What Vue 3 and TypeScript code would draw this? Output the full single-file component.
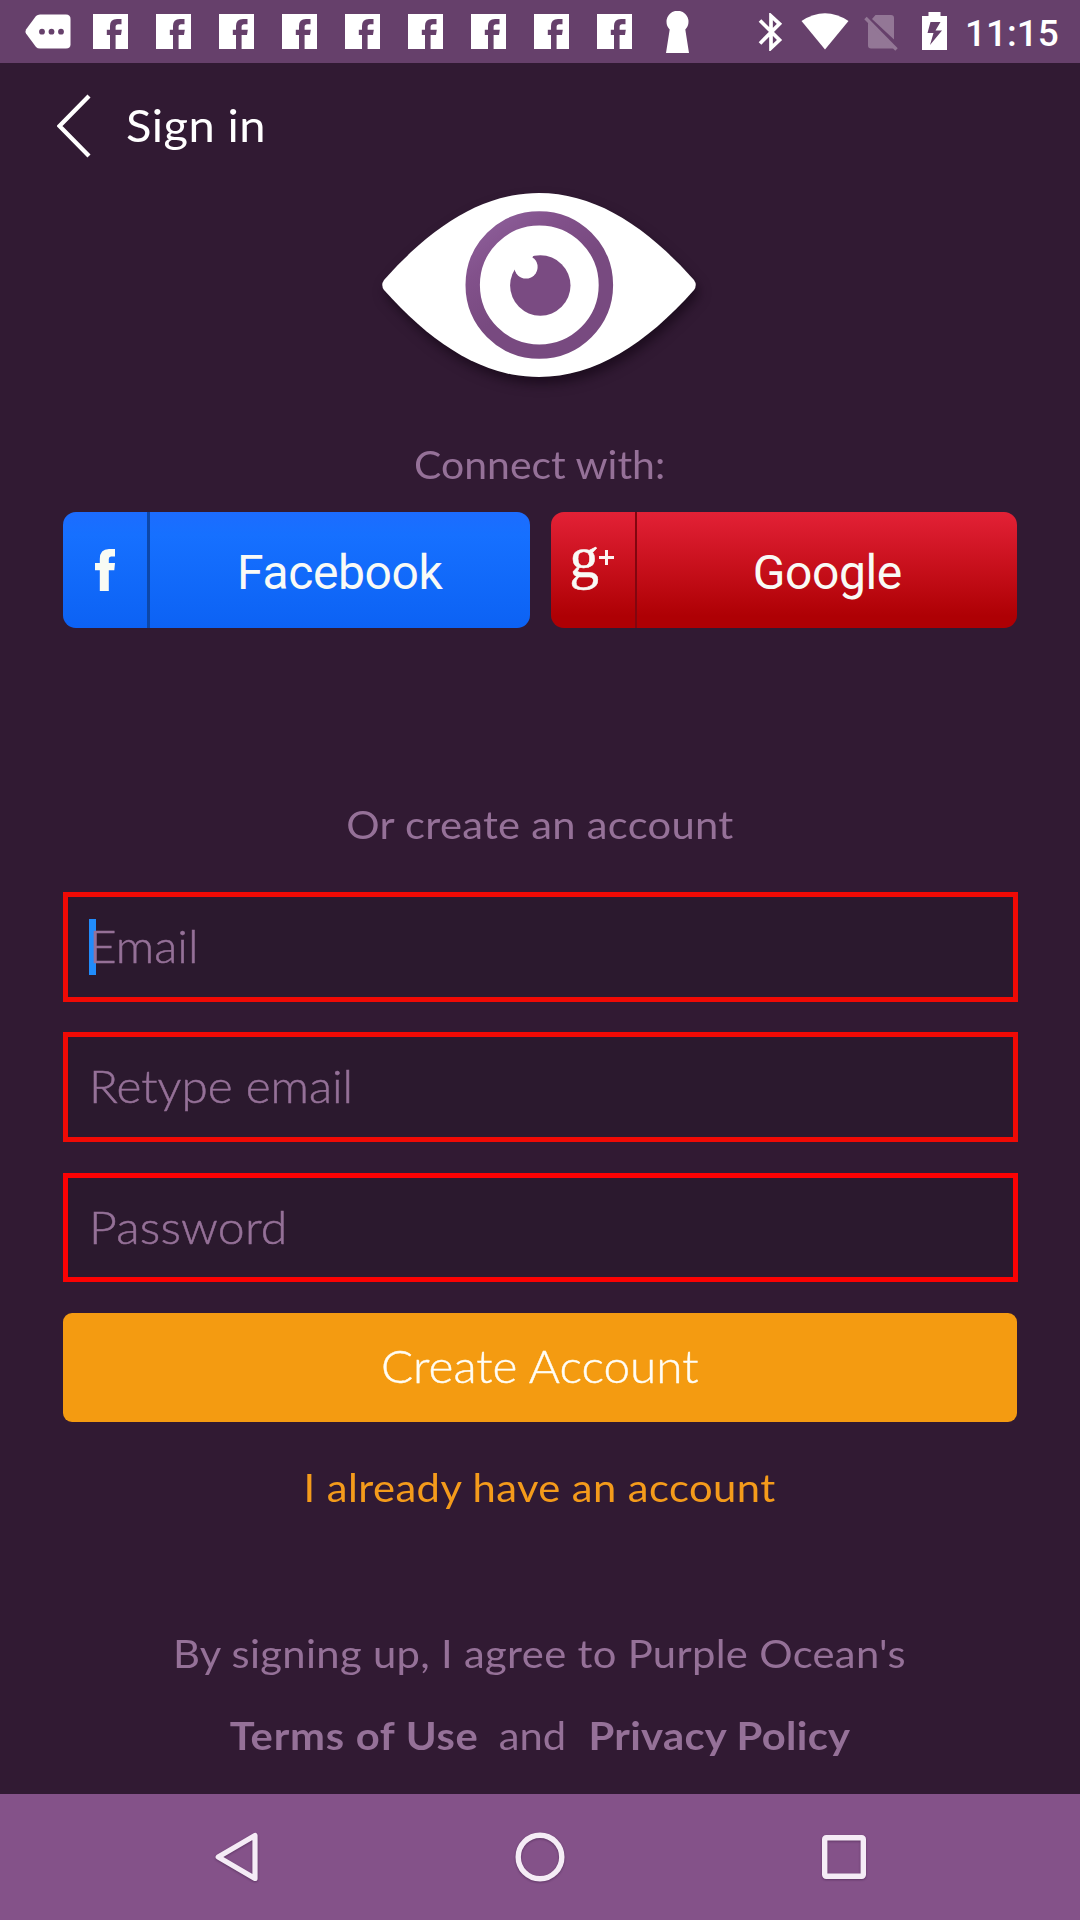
<script setup lang="ts">
const notifications: number[] = Array.from({ length: 9 }, (_, i) => i)
const fields = [
  { id: 'email', label: 'Email', focused: true },
  { id: 'retype', label: 'Retype email', focused: false },
  { id: 'password', label: 'Password', focused: false },
]
</script>

<template>
  <div class="screen">
    <div class="status">
      <svg class="tag" width="46" height="36" viewBox="0 0 46 36">
        <path d="M11 2Q12.500 .5 15 .5H41Q45.500 .5 45.500 5V30.500Q45.500 34.500 41 34.500H15Q12.500 34.500 11 33L1 19.500Q0 17.500 1 15.500Z" fill="#fff" />
        <circle cx="17" cy="17.700" r="2.900" fill="#66406b" /><circle cx="26.500" cy="17.700" r="2.900" fill="#66406b" /><circle cx="36" cy="17.700" r="2.900" fill="#66406b" />
      </svg>
      <div class="notes">
        <svg v-for="n in notifications" :key="n" width="35" height="35" viewBox="0 0 35 35">
          <path d="M0 0H35V35H22.600V21H28L28.800 15.800H22.600V12.800Q22.600 10.300 25.200 10.300H28.500V5H24Q17 5 17 12V15.800H13.800V21H17V35H0Z" fill="#fff" />
        </svg>
      </div>
      <svg class="keyhole" width="23" height="42" viewBox="0 0 23 42">
        <path d="M3.700 18.500A11 11 0 1 1 19.300 18.500L23 42H0Z" fill="#fff" />
      </svg>
      <svg class="bt" width="25" height="38" viewBox="0 0 25 38">
        <path d="M2 7.500L21.500 27L13 35V3L21.500 10.800L2 30.500" fill="none" stroke="#fff" stroke-width="3.700" />
      </svg>
      <svg class="wifi" width="48" height="37" viewBox="0 0 48 37">
        <path d="M0.500 8Q24 -7.500 47.500 8L24 36.500Z" fill="#fff" />
      </svg>
      <svg class="sim" width="36" height="38" viewBox="0 0 36 38">
        <path d="M11.500 2H27Q30 2 30 5V26.500L8 6ZM4 9.500L30 35Q29 35.500 27 35.500H7Q4 35.500 4 32.500Z" fill="#937796" />
        <path d="M1.500 5L32.500 36.500" stroke="#937796" stroke-width="3.400" />
      </svg>
      <svg class="battery" width="25" height="38" viewBox="0 0 25 38">
        <path fill-rule="evenodd" d="M6.500 0H18.500V4H25V38H0V4H6.500ZM8.500 10L5.500 21H11.500L8 33L20 18.500H13.500L18.500 10Z" fill="#fff" />
      </svg>
      <span class="clock">11:15</span>
    </div>

    <header class="head">
      <svg width="34" height="64" viewBox="0 0 34 64">
        <path d="M32 2L2.500 32L32 62" fill="none" stroke="#fff" stroke-width="4.300" />
      </svg>
      <span class="title">Sign in</span>
    </header>

    <div class="logo">
      <svg width="314" height="184" viewBox="0 0 314 184">
        <defs>
          <linearGradient id="iris" x1="0.200" y1="0" x2="0.550" y2="0.500">
            <stop offset="0" stop-color="#8b5c97" /><stop offset="0.400" stop-color="#82518b" /><stop offset="1" stop-color="#784a80" />
          </linearGradient>
        </defs>
        <path d="M2 87C50 33 101 0 157 0S264 33 312 87Q315.500 92 312 97C264 151 213 184 157 184S50 151 2 97Q-1.500 92 2 87Z" fill="#fff" />
        <circle cx="157.300" cy="92" r="66.600" fill="none" stroke="url(#iris)" stroke-width="14.400" />
        <circle cx="158.300" cy="92.500" r="30.200" fill="#7a4b82" />
        <circle cx="144" cy="74" r="11.600" fill="#fff" /><path d="M130 72L144 62L152 61L146 74L134 79Z" fill="#fff" />
      </svg>
    </div>

    <p class="note connect"><span>Connect with:</span></p>
    <div class="social">
      <button class="fb">
        <span class="mark"><svg width="20" height="42" viewBox="0 0 20 42"><path d="M20 0V7.500H16Q13.800 7.500 13.800 10V14H20L19.300 21.300H13.800V42H4.800V21.300H0V14H4.800V10Q4.800 0 14 0Z" fill="#f8fbf4" /></svg></span>
        <span class="name">Facebook</span>
      </button>
      <button class="gp">
        <span class="mark"><span class="g">g</span><svg class="plus" width="15" height="15" viewBox="0 0 15 15"><path d="M7.500 0V15M0 7.500H15" stroke="#fdf2f0" stroke-width="3" /></svg></span>
        <span class="name">Google</span>
      </button>
    </div>

    <p class="note create"><span>Or create an account</span></p>
    <form class="form">
      <div v-for="f in fields" :key="f.id" class="field" :class="f.id">
        <i v-if="f.focused" class="caret"></i>
        <span>{{ f.label }}</span>
      </div>
      <div class="submit"><span>Create Account</span></div>
    </form>
    <p class="note have"><span>I already have an account</span></p>
    <p class="note agree"><span>By signing up, I agree to Purple Ocean's</span></p>
    <p class="note legal"><b class="terms">Terms of Use</b><span class="and">and</span><b class="privacy">Privacy Policy</b></p>

    <nav class="nav">
      <svg width="48" height="52" viewBox="0 0 48 52"><path d="M42 4.500V47.500L5.200 26Z" fill="none" stroke="#f5ecf6" stroke-width="5.200" stroke-linejoin="round" /></svg>
      <svg class="home" width="50" height="50" viewBox="0 0 50 50"><circle cx="25" cy="25" r="21.800" fill="none" stroke="#f5ecf6" stroke-width="5.400" /></svg>
      <svg width="44" height="44" viewBox="0 0 44 44"><rect x="2.700" y="2.700" width="38.600" height="38.600" rx="1.500" fill="none" stroke="#f5ecf6" stroke-width="5.400" /></svg>
    </nav>
  </div>
</template>

<style>
body { background: #311a33; }
</style>

<style scoped>
.screen { width: 1080px; height: 1920px; overflow: hidden; display: flex; flex-direction: column; background: #311a33; font-family: Lato, sans-serif; color: #957198; }
.screen svg { display: block; flex: none; }
.screen span, .screen b { white-space: nowrap; }
.status { height: 63px; flex: none; display: flex; align-items: flex-start; background: #66406b; }
.tag { margin: 14px 0 0 25px; }
.notes { display: flex; gap: 28px; margin: 14px 0 0 22px; }
.keyhole { margin: 10.500px 0 0 34px; }
.bt { margin: 13px 0 0 69px; }
.wifi { margin: 13px 0 0 18px; }
.sim { margin: 13px 0 0 15px; }
.battery { margin: 12px 0 0 22px; }
.clock { margin: 12px 0 0 18px; font: 500 37px/44px Roboto, sans-serif; color: #fff; }
.head { height: 130px; flex: none; display: flex; padding: 31px 0 0 57px; box-sizing: border-box; }
.title { margin-left: 35px; color: #fff; font-size: 44px; line-height: 62px; letter-spacing: .4px; transform: scaleX(1.070); transform-origin: left; }
.logo { height: 184px; flex: none; display: flex; padding-left: 382px; }
.logo svg { overflow: visible; filter: drop-shadow(3px 7px 6px rgba(15, 4, 17, .6)); }
.note { margin: 0; flex: none; height: 50px; line-height: 50px; font-size: 39px; display: flex; justify-content: center; }
.note span, .note b { transform: scaleX(1.070); }
.note.connect span { transform: scaleX(1.050); }
.connect { margin-top: 62px; }
.social { display: flex; gap: 21px; padding: 0 63px; margin-top: 23px; height: 116px; flex: none; }
.social button { flex: 1; display: flex; padding: 0; border: 0; border-radius: 13px; overflow: hidden; color: #f9faf6; font: 400 48px/121px Roboto, sans-serif; letter-spacing: -.4px; }
.fb { background: linear-gradient(#1c6cff, #1670ff 20%, #0c62f4); }
.gp { background: linear-gradient(#e32136, #ae0004 90%); }
.mark { width: 84px; flex: none; height: 100%; display: flex; align-items: flex-start; border-right: 3px solid #0d47a8; box-sizing: content-box; }
.gp .mark { border-right: 2px solid #82060f; }
.fb .mark svg { margin: 37px 0 0 32px; }
.g { font: 400 59px/60px "Liberation Serif", serif; margin: 15px 0 0 19px; letter-spacing: 0; -webkit-text-stroke: .5px currentColor; }
.plus { margin: 38px 0 0 0; }
.name { flex: 1; text-align: center; }
.gp .name { padding-left: 1px; }
.create { margin-top: 171px; letter-spacing: .25px; }
.form { margin: 43px 62px 0 63px; display: flex; flex-direction: column; flex: none; }
.field { position: relative; height: 110px; box-sizing: border-box; border: 5px solid #f00a05; background: #2b192e; padding-left: 20.500px; font-size: 45px; font-weight: 300; line-height: 98px; -webkit-text-stroke: .5px currentColor; }
.email { margin-bottom: 30px; }
.retype { margin-bottom: 31px; }
.password { letter-spacing: .2px; margin-bottom: 31px; height: 109px; border-color: #fb0203; }
.caret { position: absolute; left: 21px; top: 22px; width: 7px; height: 56px; background: #218cfb; }
.field span { position: relative; display: inline-block; transform: scaleX(1.060); transform-origin: left; }
.field.password span { transform: scaleX(1.070); }
.submit { height: 109px; margin-right: 1px; border-radius: 9px; background: #f49b11; color: #fffdf5; display: flex; justify-content: center; font-size: 45px; font-weight: 300; line-height: 107px; -webkit-text-stroke: .4px currentColor; }
.submit span { transform: scaleX(1.060); }
.have { margin-top: 40px; color: #f49b1b; letter-spacing: .4px; }
.agree { margin-top: 116px; letter-spacing: .3px; }
.legal { margin-top: 32px; }
.terms { letter-spacing: .7px; }
.and { margin: 0 33px 0 31px; }
.privacy { letter-spacing: .3px; }
.nav { margin-top: auto; height: 126px; flex: none; background: #845289; display: flex; align-items: center; padding: 0 214px 0 213px; box-sizing: border-box; justify-content: space-between; }
.nav svg { filter: drop-shadow(0 1px 1px rgba(50, 20, 60, .45)); }
.nav .home { margin-right: 3px; }
</style>
